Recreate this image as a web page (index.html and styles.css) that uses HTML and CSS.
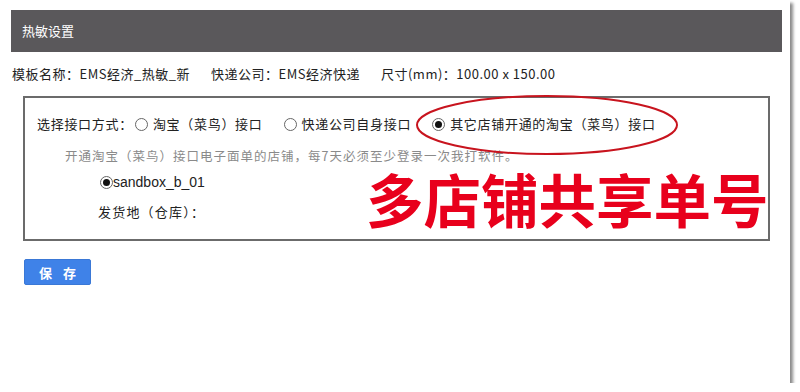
FILE: index.html
```html
<!DOCTYPE html>
<html lang="zh-CN">
<head>
<meta charset="utf-8">
<title>热敏设置</title>
<link rel="stylesheet" href="styles.css">
</head>
<body>
<div class="card">
  <div class="header">热敏设置</div>
  <div class="info">
    <span>模板名称：EMS经济_热敏_新</span>
    <span>快递公司：EMS经济快递</span>
    <span>尺寸(mm)：100.00 x 150.00</span>
  </div>
  <div class="box">
    <div class="row">
      <span class="lbl">选择接口方式：</span>
      <span class="opt"><span class="radio"></span>淘宝（菜鸟）接口</span>
      <span class="opt"><span class="radio"></span>快递公司自身接口</span>
      <span class="opt"><span class="radio on"></span>其它店铺开通的淘宝（菜鸟）接口</span>
    </div>
    <div class="hint">开通淘宝（菜鸟）接口电子面单的店铺，每7天必须至少登录一次我打软件。</div>
    <div class="shop"><span class="radio on"></span><span class="latin">sandbox_b_01</span></div>
    <div class="wh">发货地（仓库）：</div>
    <svg class="ellipse" width="270" height="66" viewBox="0 0 270 66"><ellipse cx="134" cy="33" rx="130" ry="29" fill="none" stroke="#c8141e" stroke-width="2"/></svg>
    <div class="big">多店铺共享单号</div>
  </div>
  <button class="save">保 存</button>
</div>
</body>
</html>
```
FILE: styles.css
```css
html, body {
  margin: 0;
  padding: 0;
  background: #fff;
}
body {
  font-family: "Noto Sans CJK SC", "Liberation Sans", sans-serif;
  color: #333;
  font-size: 13px;
}
.card {
  width: 790px;
  height: 383px;
  background: #fff;
  box-shadow: 3px 3px 3px #8a8a8a;
  padding-top: 10px;
  box-sizing: border-box;
}
.header {
  margin-left: 11px;
  width: 771px;
  height: 42px;
  background: #5a585b;
  color: #fff;
  font-size: 13px;
  line-height: 42px;
  padding-left: 11px;
  box-sizing: border-box;
}
.info {
  display: flex;
  gap: 21px;
  margin: 12px 0 0 12px;
  height: 20px;
  line-height: 20px;
  color: #222;
  letter-spacing: 0.5px;
}
.box {
  position: relative;
  margin: 12px 0 0 23px;
  width: 747px;
  height: 145px;
  border: 2px solid #6b6b6b;
  box-sizing: border-box;
  padding: 16px 0 0 12px;
}
.row {
  display: flex;
  align-items: center;
  height: 20px;
  line-height: 20px;
  color: #222;
  letter-spacing: 0.7px;
}
.lbl { margin-right: 2px; }
.opt {
  display: flex;
  align-items: center;
  margin-right: 21px;
}
.radio {
  display: inline-block;
  width: 11px;
  height: 11px;
  border: 1px solid #666;
  border-radius: 50%;
  margin-right: 5px;
  position: relative;
  background: #fff;
}
.radio.on::after {
  content: "";
  position: absolute;
  left: 2px;
  top: 2px;
  width: 7px;
  height: 7px;
  border-radius: 50%;
  background: #111;
}
.hint {
  margin: 14px 0 0 28px;
  color: #8a8a8a;
  font-size: 12.5px;
  line-height: 16px;
  letter-spacing: 1px;
}
.shop {
  display: flex;
  align-items: center;
  margin: 8px 0 0 63px;
  height: 20px;
}
.shop .radio { margin-right: 0; }
.latin {
  font-family: "Liberation Sans", sans-serif;
  font-size: 14px;
  color: #222;
}
.wh {
  margin: 10px 0 0 61px;
  line-height: 20px;
  color: #222;
  letter-spacing: 1.2px;
}
.ellipse {
  position: absolute;
  left: 388px;
  top: -6px;
}
.big {
  position: absolute;
  left: 341px;
  top: 76px;
  font-size: 57.5px;
  font-weight: 700;
  color: #e8001c;
  line-height: 48px;
  white-space: nowrap;
}
.save {
  display: block;
  margin: 18px 0 0 24px;
  width: 67px;
  height: 26px;
  background: #3f82e8;
  border: 1px solid #3a78d6;
  border-radius: 2px;
  color: #fff;
  font-family: "Noto Sans CJK SC", sans-serif;
  font-size: 13px;
  font-weight: 700;
  letter-spacing: 4px;
  padding: 0 0 0 4px;
}
```
